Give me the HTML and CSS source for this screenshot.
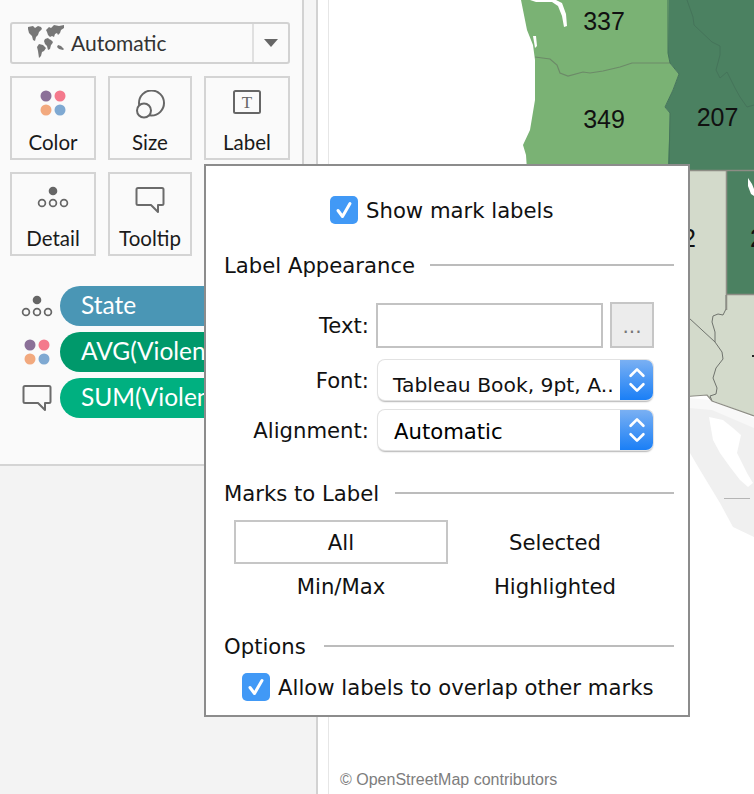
FILE: index.html
```html
<!DOCTYPE html>
<html lang="en">
<head>
<meta charset="utf-8">
<title>Label</title>
<link rel="stylesheet" href="styles.css">
</head>
<body>
<svg class="defs" width="0" height="0" aria-hidden="true">
  <symbol id="i-color" viewBox="0 0 26 26"><circle cx="6" cy="6" r="5.5" fill="#8b7098"/><circle cx="20" cy="6" r="5.5" fill="#f4798c"/><circle cx="6" cy="20" r="5.5" fill="#f2a97e"/><circle cx="20" cy="20" r="5.5" fill="#7fa9d2"/></symbol>
  <symbol id="i-detail" viewBox="0 0 34 22"><circle cx="17" cy="5" r="4.3" fill="#666"/><g fill="none" stroke="#666" stroke-width="1.7"><circle cx="6" cy="17" r="3.4"/><circle cx="17" cy="17" r="3.4"/><circle cx="28" cy="17" r="3.4"/></g></symbol>
  <symbol id="i-tip" viewBox="0 0 30 28"><path d="M3 2h24a1.500 1.500 0 0 1 1.500 1.500v14a1.500 1.500 0 0 1-1.500 1.500h-4v7l-7-7H3a1.500 1.500 0 0 1-1.500-1.500v-14A1.500 1.500 0 0 1 3 2z" fill="none" stroke="#6b6b6b" stroke-width="2" stroke-linejoin="round"/></symbol>
</svg>

<div class="app">
  <aside class="side">
    <div class="side-band">
      <div class="side-top">
        <div class="mark-type">
          <svg class="world" viewBox="0 0 36 34">
            <path fill="#777" d="M0 2l5-1 2 2 3-2 3 1 1 2-3 3-1 3-2 2-1 4-2-1-1-4-3-3-1-4zM11 19l4 1 3 3-2 3-2 1-1 4-2 2-1-7-1-4zM18 5l3-3 2 1 3-3 5 1 5-1v3l-3 2-1 3-2 2-1-2-2 1-1 3-2-1-2 1-2-2-1-3zM17 14l3-1 1 1 2 1 2 2-1 2-1 1-1 4-2 1-1-4-2-2-1-3zM30 20l3 1 3 3-1 1-4-1-2-2z"/>
          </svg>
          <span class="mark-name">Automatic</span>
          <span class="mark-caret"></span>
        </div>
        <div class="cards">
          <div class="card"><svg class="ic" width="26" height="26"><use href="#i-color"/></svg><span>Color</span></div>
          <div class="card"><svg class="ic" width="30" height="30" viewBox="0 0 30 30"><circle cx="16.500" cy="13" r="12.500" fill="none" stroke="#666" stroke-width="2"/><circle cx="9" cy="20.500" r="7" fill="#fafafa" stroke="#666" stroke-width="2"/></svg><span>Size</span></div>
          <div class="card"><svg class="ic" width="28" height="24" viewBox="0 0 28 24"><rect x="1" y="1" width="26" height="22" rx="1.500" fill="none" stroke="#666" stroke-width="2"/><text x="14" y="18" text-anchor="middle" class="t-glyph">T</text></svg><span>Label</span></div>
          <div class="card"><svg class="ic" width="34" height="22"><use href="#i-detail"/></svg><span>Detail</span></div>
          <div class="card"><svg class="ic" width="30" height="28"><use href="#i-tip"/></svg><span>Tooltip</span></div>
        </div>
        <ul class="pills">
          <li class="pill-row"><svg width="34" height="22"><use href="#i-detail"/></svg><span class="pill pill-state">State</span></li>
          <li class="pill-row"><svg width="26" height="26"><use href="#i-color"/></svg><span class="pill pill-avg">AVG(Violen</span></li>
          <li class="pill-row"><svg width="30" height="28"><use href="#i-tip"/></svg><span class="pill pill-sum">SUM(Violen</span></li>
        </ul>
      </div>
    </div>
    <div class="side-bottom"></div>
  </aside>
  <main class="map">
    <svg class="map-svg" viewBox="329 0 425 794" width="425" height="794">
      <!-- Mexico -->
      <path fill="#f0f0f0" d="M689 405L712 402L754 420V537L733 527L720 503L700 470L690 453L689 453Z"/>
      <path fill="#f8f8f8" d="M689 398L711 400L754 418V428L712 410L689 408Z"/>
      <path fill="#fff" d="M709 417L723 420L733 428L741 435L737 453L747 473L753 483L748 487L740 480L730 467L720 453L713 440Z"/>
      <!-- light states -->
      <path fill="#d3dacb" d="M680 171H754V416L711 400L707 395L680 397Z"/>
      <path fill="none" stroke="#6f736d" stroke-width="1" d="M689 318L715 342M726 295V309L723 315L718 314L713 316L712 322L715 332L715 342L722 352L723 359L716 368L713 378L717 388L716 394L710 396L712 401"/>
      <path fill="none" stroke="#8d8d85" stroke-width="1.200" d="M680 397L707 395L712 401L754 416"/>
      <!-- Oregon and Washington -->
      <path fill="#7ab274" d="M521 0H669V53L670 63L679 74L673 90L665 107L670 113L669 170H527L526 155L523 145L530 130L535 100L535 60L533 45L527 30Z"/>
      <path fill="none" stroke="#6c8a68" stroke-width="1.200" d="M535 57L550 59L557 65L560 73L568 76L583 72L590 73L603 71L620 67L632 63L670 63"/>
      <path fill="#fff" d="M530 0H556L562 3L566 14L567 26L564 27L562 16L558 6L552 2H536Z"/>
      <path fill="#fff" d="M533 36L536 36L537 46L535 48Z"/>
      <!-- Idaho and beyond -->
      <path fill="#4b8161" d="M669 0H754V170H660V165L668 165L670 113L665 107L673 90L679 74L670 63L668 53Z"/>
      <rect x="727" y="171" width="27" height="123" fill="#4b8161"/>
      <path fill="none" stroke="#45745a" stroke-width="1" d="M668 0V53L670 63L679 74L673 90L665 107L670 113L669 170M687 0L693 17L694 25L712 42L720 46L720 55L716 70L720 78L727 72L735 88L740 97L747 107L754 105"/>
      <path fill="none" stroke="#8d8d85" stroke-width="1.500" d="M660 170.500H754M726.500 171V310M727 294.500H754"/>
      <path fill="#fff" d="M748 178L752 184L754 189V196L751 194L748 186Z"/>
      <g class="map-labels">
        <text x="604" y="30" text-anchor="middle">337</text>
        <text x="604" y="128" text-anchor="middle">349</text>
        <text x="717.500" y="126" text-anchor="middle">207</text>
        <text x="682" y="247" text-anchor="middle">12</text>
        <text x="750" y="247">2</text>
      </g>
      <rect x="752" y="355" width="2" height="2" fill="#222"/>
      <path fill="none" stroke="#b5b5b5" d="M724 498.500H750"/>
    </svg>
    <div class="attr">© OpenStreetMap contributors</div>
  </main>
</div>

<section class="dialog">
  <label class="check check-main"><span class="box"><svg viewBox="0 0 28 28" width="28" height="28"><path d="M8 14.500l4.500 6L20 7.500" fill="none" stroke="#fff" stroke-width="3" stroke-linecap="round" stroke-linejoin="round"/></svg></span>Show mark labels</label>

  <div class="group-title g-appearance"><span>Label Appearance</span><i></i></div>
  <div class="form">
    <div class="form-row row-text">
      <span class="form-label">Text:</span>
      <span class="text-input"></span>
      <span class="more">...</span>
    </div>
    <div class="form-row row-font">
      <span class="form-label">Font:</span>
      <span class="select select-font"><span class="select-val">Tableau Book, 9pt, A..</span><span class="stepper"><svg width="20" height="32" viewBox="0 0 18 30"><path d="M3 11l6-6 6 6M3 19l6 6 6-6" fill="none" stroke="#fff" stroke-width="2.500" stroke-linecap="round" stroke-linejoin="round"/></svg></span></span>
    </div>
    <div class="form-row row-align">
      <span class="form-label">Alignment:</span>
      <span class="select"><span class="select-val val-strong">Automatic</span><span class="stepper"><svg width="20" height="32" viewBox="0 0 18 30"><path d="M3 11l6-6 6 6M3 19l6 6 6-6" fill="none" stroke="#fff" stroke-width="2.500" stroke-linecap="round" stroke-linejoin="round"/></svg></span></span>
    </div>
  </div>

  <div class="group-title g-marks"><span>Marks to Label</span><i></i></div>
  <div class="marks">
    <span class="mark-opt is-on">All</span>
    <span class="mark-opt">Selected</span>
    <span class="mark-opt">Min/Max</span>
    <span class="mark-opt">Highlighted</span>
  </div>

  <div class="group-title g-options"><span>Options</span><i></i></div>
  <label class="check check-overlap"><span class="box"><svg viewBox="0 0 28 28" width="28" height="28"><path d="M8 14.500l4.500 6L20 7.500" fill="none" stroke="#fff" stroke-width="3" stroke-linecap="round" stroke-linejoin="round"/></svg></span>Allow labels to overlap other marks</label>
</section>
</body>
</html>
```
FILE: styles.css
```css
* { box-sizing: border-box; }
html, body { margin: 0; padding: 0; height: 100%; }
body { position: relative; width: 754px; height: 794px; overflow: hidden; background: #fff; font-family: "Lato", "Liberation Sans", sans-serif; color: #111; }
.defs { position: absolute; }
.app { display: flex; height: 794px; }

.side { width: 318px; flex: none; display: flex; flex-direction: column; border-right: 2px solid #d2d2d2; }
.side-band { height: 464px; background: #f5f5f5; flex: none; }
.side-top { width: 304px; height: 464px; background: #fafafa; padding: 22px 12px 0 10px; border-right: 2px solid #d2d2d2; overflow: hidden; }
.side-bottom { flex: 1; background: #f3f3f3; border-top: 2px solid #d4d4d4; }

.mark-type { height: 42px; width: 280px; border: 2px solid #d2d2d2; border-radius: 3px; display: flex; align-items: center; padding-left: 16px; position: relative; }
.world { width: 36px; height: 34px; flex: none; margin-top: -2px; }
.mark-name { margin-left: 7px; margin-bottom: 2px; font-size: 21px; color: #333; }
.mark-caret { position: absolute; right: 0; top: 0; bottom: 0; width: 36px; border-left: 2px solid #e0e0e0; }
.mark-caret::after { content: ""; position: absolute; left: 10px; top: 15px; border-left: 7px solid transparent; border-right: 7px solid transparent; border-top: 8px solid #666; }

.cards { display: grid; grid-template-columns: 86px 84px 86px; grid-auto-rows: 84px; gap: 12px; margin-top: 12px; }
.card { border: 2px solid #d4d4d4; display: flex; flex-direction: column; align-items: center; font-size: 20.500px; color: #1a1a1a; position: relative; }
.card .ic { position: absolute; left: 50%; top: 12px; transform: translateX(-50%); }
.card span { position: absolute; top: 51px; left: 0; right: 0; text-align: center; line-height: 26px; }

.pills { list-style: none; margin: 30px 0 0; padding: 0; display: flex; flex-direction: column; gap: 6px; }
.pill-row { display: flex; align-items: center; height: 40px; }
.pill-row svg { flex: none; width: 34px; margin: 0 6px 0 10px; }
.pill { display: block; width: 220px; height: 40px; line-height: 37px; border-radius: 20px; padding-left: 21px; color: #fff; font-size: 24.500px; white-space: nowrap; overflow: hidden; }
.pill-state { background: #4a96b5; }
.pill-avg { background: #00996b; }
.pill-sum { background: #00b080; }

.map { flex: 1; position: relative; background: #fff; overflow: hidden; padding-left: 10px; }
.map::before { content: ""; display: block; width: 1px; height: 100%; background: #e6e6e6; }
.map-svg { display: block; position: absolute; left: 11px; top: 0; }
.map-labels text { font-family: "Liberation Sans", sans-serif; font-size: 25px; fill: #111; }
.t-glyph { font-family: "Liberation Serif", serif; font-size: 17px; fill: #666; }
.attr { position: absolute; left: 22px; top: 770px; font-family: "Liberation Sans", sans-serif; font-size: 16px; line-height: 20px; color: #7d7d7d; white-space: nowrap; }

.dialog { position: absolute; left: 204px; top: 164px; width: 486px; height: 553px; background: #fff; border: 2px solid #8c8c8c; font-family: "DejaVu Sans", sans-serif; font-size: 21.200px; color: #111; padding: 0 14px 0 18px; display: flex; flex-direction: column; }
.check { display: flex; align-items: center; white-space: nowrap; }
.check-main { margin: 30px 0 0 106px; height: 28px; }
.check-overlap { margin: 13px 0 0 18px; height: 28px; }
.box { width: 28px; height: 28px; border-radius: 5px; background: #4199f6; margin-right: 8px; flex: none; display: block; }
.box svg { display: block; }
.group-title { display: flex; align-items: center; height: 28px; white-space: nowrap; }
.group-title i { flex: 1; height: 2px; background: #bcbcbc; }
.g-appearance { margin-top: 27px; }
.g-appearance i { margin-left: 15px; }
.g-marks { margin-top: 29px; }
.g-marks i { margin-left: 16px; }
.g-options { margin-top: 24px; }
.g-options i { margin-left: 18px; }
.form { margin-top: 23px; display: flex; flex-direction: column; }
.form-row { display: flex; align-items: center; }
.form-label { width: 145px; text-align: right; margin-right: 7px; flex: none; }
.row-text { height: 46px; }
.row-font { height: 40px; margin-top: 12px; }
.row-align { height: 40px; margin-top: 10px; }
.text-input { width: 227px; height: 45px; border: 2px solid #c3c3c3; background: #fff; flex: none; }
.more { width: 44px; height: 46px; margin-left: 7px; border: 2px solid #c6c6c6; background: #ececec; color: #777; text-align: center; line-height: 44px; font-size: 20px; flex: none; }
.select { margin-left: 2px; width: 275px; height: 40px; border-radius: 7px; background: #fff; box-shadow: 0 0 0 1px #e2e2e2, 0 1.500px 1.500px #b5b5b5; display: flex; overflow: hidden; flex: none; }
.select-val { flex: 1; padding-left: 16px; line-height: 44px; white-space: nowrap; overflow: hidden; }
.select-font .select-val { padding-left: 15px; line-height: 50px; font-size: 20.300px; }
.val-strong { color: #000; }
.stepper { width: 33px; flex: none; background: linear-gradient(#7ab0f3, #1a7ff6); display: flex; align-items: center; justify-content: center; }
.marks { margin: 13px 0 0 10px; display: grid; grid-template-columns: 214px 214px; grid-auto-rows: 44px; }
.mark-opt { text-align: center; line-height: 46px; }
.is-on { border: 2px solid #c6c6c6; line-height: 42px; }
```
